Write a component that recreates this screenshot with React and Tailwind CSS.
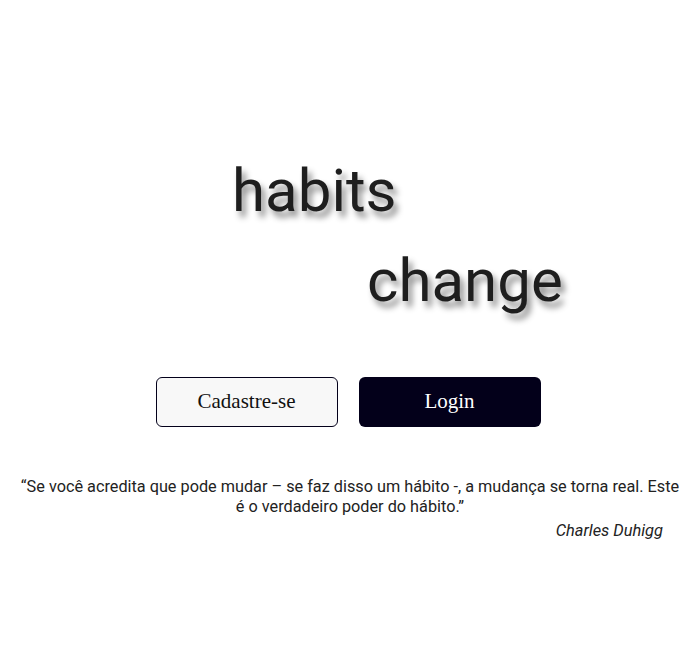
export default function App() {
  return (
    <div className="w-[700px] h-[658px] bg-white flex flex-col font-['Roboto',sans-serif]">
      <div className="pt-[146px] pl-[232px] flex flex-col">
        <div className="text-[60px] leading-[90px] text-[#1e1e1e] [text-shadow:4px_6px_6px_rgba(0,0,0,0.45)]">habits</div>
        <div className="text-[60px] leading-[90px] text-[#1e1e1e] ml-[135px] [text-shadow:4px_6px_6px_rgba(0,0,0,0.45)]">change</div>
      </div>
      <div className="flex justify-center gap-[21px] mt-[51px] pr-[4px] font-['Liberation_Serif',serif] text-[21px]">
        <button className="w-[182px] h-[50px] rounded-[6px] border border-[#03001a] bg-[#f8f8f8] text-[#111]">Cadastre-se</button>
        <button className="w-[182px] h-[50px] rounded-[6px] bg-[#03001a] text-white">Login</button>
      </div>
      <div className="mt-[50px] px-[18px] text-center text-[16.25px] leading-[20px] text-[#222]">
        “Se você acredita que pode mudar – se faz disso um hábito -, a mudança se torna real. Este é o verdadeiro poder do hábito.”
      </div>
      <div className="mt-[4px] pr-[37px] text-right italic text-[16.4px] leading-[20px] text-[#222]">Charles Duhigg</div>
    </div>
  );
}
